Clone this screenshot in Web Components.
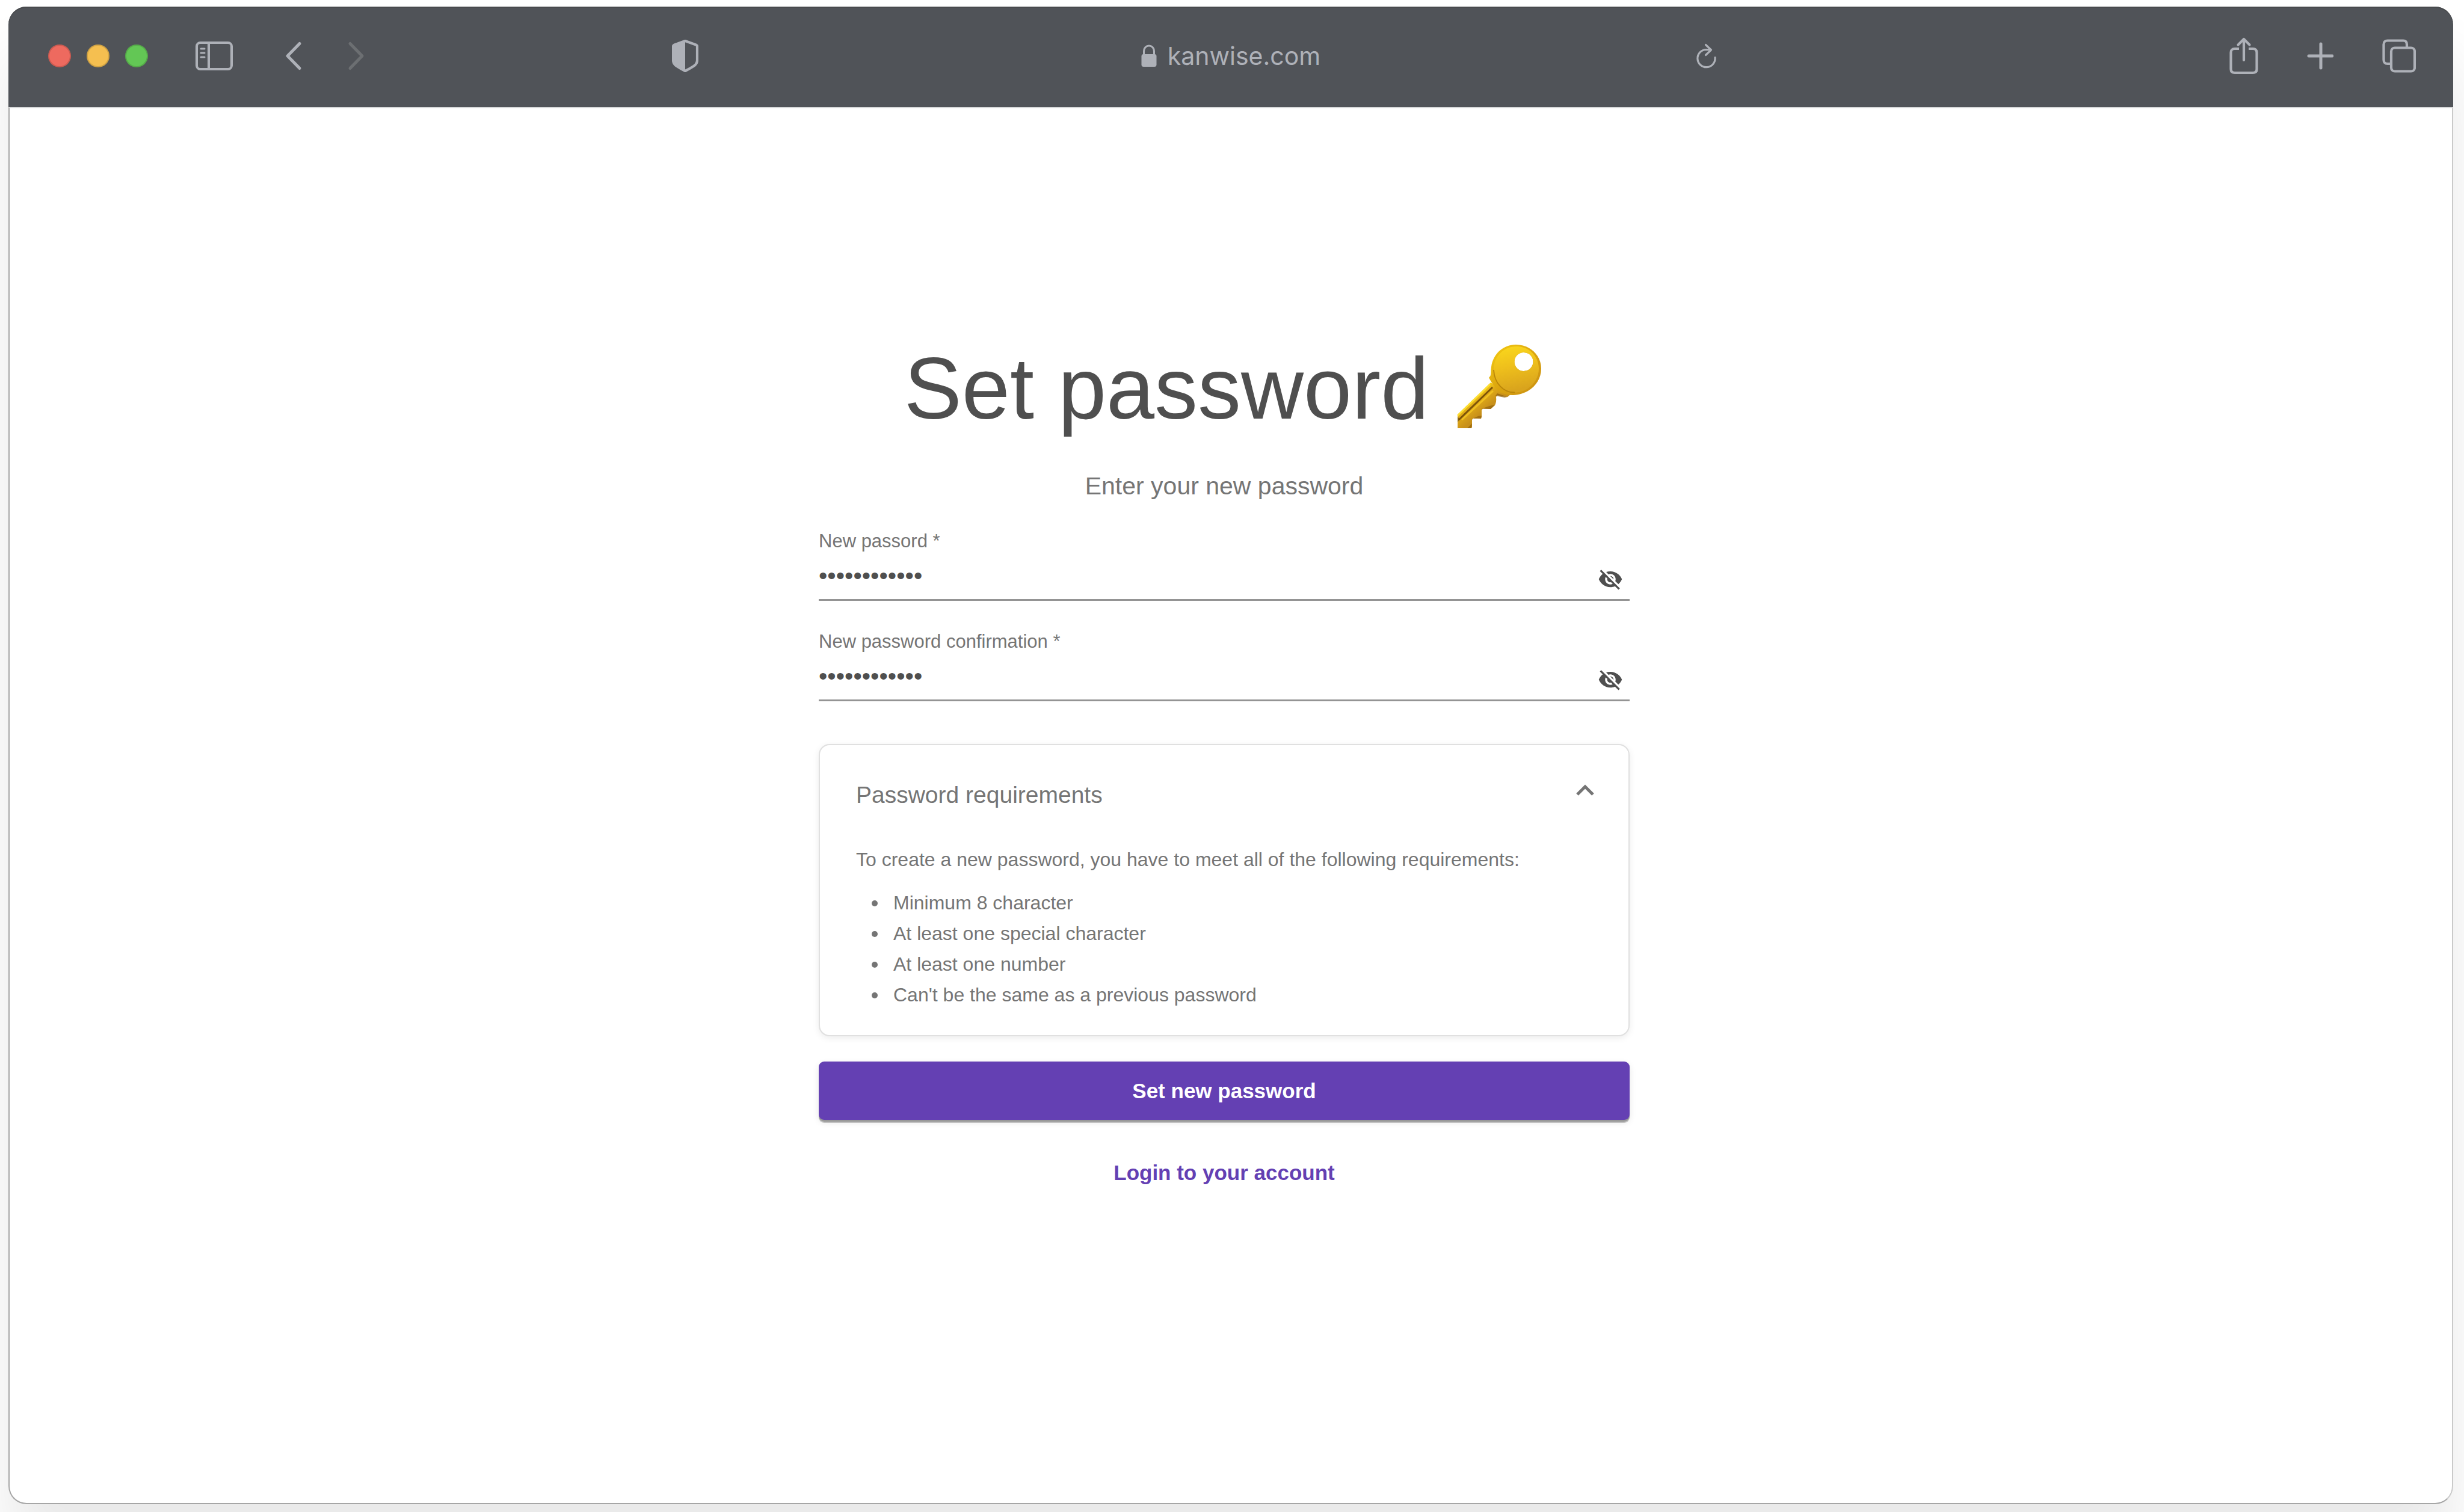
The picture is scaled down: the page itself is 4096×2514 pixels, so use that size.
<!DOCTYPE html>
<html lang="en">
<head>
<meta charset="utf-8">
<title>Set password</title>
<style>
html, body { height: 100%; }
body {
  margin: 0;
  box-sizing: border-box;
  padding: 11px 18px 13px 14px;
  background: #fff;
  overflow: hidden;
  font-family: "Liberation Sans", Arial, sans-serif;
  color: #757575;
}
</style>
</head>
<body>
<browser-window address="kanwise.com">
  <password-page>
    <span slot="title">Set password</span>
    <span slot="subtitle">Enter your new password</span>
    <password-field label="New passord *" value="kanwise-2023"></password-field>
    <password-field label="New password confirmation *" value="kanwise-2023"></password-field>
    <requirements-card slot="requirements" heading="Password requirements">
      <span slot="intro">To create a new password, you have to meet all of the following requirements:</span>
      <requirement-item>Minimum 8 character</requirement-item>
      <requirement-item>At least one special character</requirement-item>
      <requirement-item>At least one number</requirement-item>
      <requirement-item>Can't be the same as a previous password</requirement-item>
    </requirements-card>
    <submit-button slot="submit">Set new password</submit-button>
    <text-link slot="link" to="#login">Login to your account</text-link>
  </password-page>
</browser-window>

<script>
class BaseElement extends HTMLElement {
  connectedCallback() {
    if (this.shadowRoot) return;
    this.attachShadow({ mode: 'open' }).innerHTML = this.render();
    this.ready();
  }
  ready() {}
}

customElements.define('browser-window', class extends BaseElement {
  render() {
    return `<style>
      :host { display: flex; flex-direction: column; height: 100%; border-radius: 30px; box-shadow: 0 80px 100px rgba(0,0,0,.09); }
      main { flex: 1; box-sizing: border-box; background: #fff; border: 2px solid #a6a6a6; border-top-color: #d6d8d9; border-right-color: #cacaca; border-radius: 0 0 30px 30px; }
    </style>
    <browser-toolbar address="${this.getAttribute('address')}"></browser-toolbar>
    <main><slot></slot></main>`;
  }
});

customElements.define('browser-toolbar', class extends BaseElement {
  render() {
    return `<style>
      :host {
        display: grid; grid-template-columns: 1fr auto 1fr; align-items: center;
        box-sizing: border-box; height: 167px; padding: 0 62px 4px 66px;
        background: #505358; color: #aeb1b8; border-radius: 30px 30px 0 0;
        box-shadow: inset 0 2px 0 #484a4d;
      }
      .side, .tools, .lights, .nav, .address { display: flex; align-items: center; }
      .side { justify-content: space-between; }
      .leading { padding-right: 736px; }
      .trailing { padding-left: 621px; }
      .tools { gap: 79px; }
      .trailing .tools { gap: 81px; }
      .lights { gap: 26px; }
      .nav { gap: 68px; }
      .address { gap: 18px; margin-right: 4px; font: 41px/48px Inter, sans-serif; }
      button { display: block; padding: 0; border: 0; background: none; color: inherit; }
      button:disabled { color: #6c6f72; }
      svg { display: block; fill: none; stroke: currentColor; stroke-width: 5; stroke-linecap: round; stroke-linejoin: round; }
      .dot { width: 38px; height: 38px; border-radius: 50%; box-shadow: inset 0 0 0 2px rgba(0,0,0,.14); }
      .close { background: #ee6a5f; } .min { background: #f5bf50; } .max { background: #63c755; }
    </style>
    <div class="side leading">
      <div class="tools">
        <div class="lights">
          <button class="dot close" aria-label="Close"></button>
          <button class="dot min" aria-label="Minimize"></button>
          <button class="dot max" aria-label="Zoom"></button>
        </div>
        <button aria-label="Sidebar"><svg width="66" height="50" viewBox="0 0 66 50"><rect x="2" y="3" width="58" height="44" rx="6" stroke-width="4"/><path d="M22 3v44" stroke-width="4" stroke-linecap="butt"/><path d="M9 13h6M9 20h6M9 27h6" stroke-width="3"/></svg></button>
        <div class="nav">
          <button aria-label="Back"><svg width="36" height="50" viewBox="0 0 36 50"><path d="M28 4.500L8 25l20 20.500"/></svg></button>
          <button aria-label="Forward" disabled><svg width="36" height="50" viewBox="0 0 36 50"><path d="M8 4.500L28 25L8 45.500"/></svg></button>
        </div>
      </div>
      <button aria-label="Privacy report"><svg width="44" height="54" viewBox="0 0 44 54"><path d="M22 2L3.500 8.800Q2 9.500 2 11V34Q2 40 8 44Q14 48 22 52Q30 48 36 44Q42 40 42 34V11Q42 9.500 40.500 8.800Z" stroke-width="4.200"/><path d="M22 2L2 10V34Q3 40 8 44L22 52Z" fill="currentColor" stroke="none"/></svg></button>
    </div>
    <div class="address">
      <svg width="26" height="38" viewBox="0 0 26 38"><rect x="0.500" y="16" width="25" height="21" rx="3.500" fill="currentColor" stroke="none"/><path d="M4.500 17V11a8.500 9 0 0 1 17 0v6" stroke-width="3"/></svg>
      <span>${this.getAttribute('address')}</span>
    </div>
    <div class="side trailing">
      <button aria-label="Reload"><svg width="34" height="42" viewBox="0 0 34 42"><path d="M31 23.500A14.600 14.600 0 1 1 16.500 10.500L24 10.800M15.500 2.500L24.500 11L15.500 19.500" stroke-width="3.200"/></svg></button>
      <div class="tools">
        <button aria-label="Share"><svg width="48" height="62" viewBox="0 0 48 62"><path d="M16 19H9Q2.500 19 2.500 25.500V53Q2.500 59 9 59H39Q45.500 59 45.500 53V25.500Q45.500 19 39 19H32" stroke-width="4.200" stroke-linecap="butt"/><path d="M24 38V4M14.500 12.500L24 3L33.500 12.500" stroke-width="4.200"/></svg></button>
        <button aria-label="New tab"><svg width="44" height="46" viewBox="0 0 44 46"><path d="M23 3v40M3 23h39"/></svg></button>
        <button aria-label="Tab overview"><svg width="56" height="56" viewBox="0 0 56 56"><rect x="15" y="14.500" width="39" height="39" rx="6" stroke-width="4.200"/><path d="M15 41H9Q2.500 41 2.500 34.500V9Q2.500 2.500 9 2.500H35Q41 2.500 41 9V14" stroke-width="4.200" stroke-linecap="butt"/></svg></button>
      </div>
    </div>`;
  }
});

customElements.define('key-icon', class extends BaseElement {
  render() {
    return `<style>:host { display: block; } svg { display: block; }</style>
    <svg width="148" height="156" viewBox="0 -1 148 156" role="img" aria-label="Key">
      <defs>
        <linearGradient id="head" x1="0" y1="0" x2="0.200" y2="1"><stop offset="0" stop-color="#fbd91c"/><stop offset="0.500" stop-color="#eebf1c"/><stop offset="1" stop-color="#d9a41d"/></linearGradient>
        <linearGradient id="rim" x1="0" y1="0" x2="1" y2="1"><stop offset="0" stop-color="#f7cf12"/><stop offset="0.550" stop-color="#d9a20f"/><stop offset="1" stop-color="#c98f12"/></linearGradient>
        <linearGradient id="blade" gradientUnits="userSpaceOnUse" x1="24" y1="92" x2="44" y2="116"><stop offset="0" stop-color="#fbd31a"/><stop offset="0.400" stop-color="#e0ab17"/><stop offset="1" stop-color="#c8901a"/></linearGradient>
      </defs>
      <path d="M59 66L4 119V142H27L28 140V128L30 125.500L43 126L44 123V112L46 109.500L59 110L66 104Q69 98 68 90L70 87L87 90L93 85Z" fill="url(#blade)"/>
      <path d="M27 127L30 125.500L43 126L44 121L38 122ZM43 110L46 109.500L59 110L66 103L57 105ZM67 88L70 84L87 90L82 91ZM20 142H27L28 134Z" fill="#94640f" opacity=".75"/>
      <path d="M6 128L62 74" stroke="#7d5408" stroke-width="3" fill="none"/>
      <path d="M11 128L63 80" stroke="#f0c020" stroke-width="3" fill="none"/>
      <path d="M4 121L58 69" stroke="#fde02e" stroke-width="2.500" fill="none"/>
      <path d="M4 123v9l4-5z" fill="#6f4a08" opacity=".7"/>
      <path fill-rule="evenodd" fill="url(#rim)" d="M101 3C80 3 63 18 60 40C59 46 60 51 58.500 55L56 58L60 65Q66 74 74 82Q84 87 96 87C124 86 143 66 143 43C143 20 124 3 101 3ZM114 16a15.500 15.500 0 1 1 0 31a15.500 15.500 0 1 1 0-31Z"/>
      <path fill-rule="evenodd" fill="url(#head)" d="M102 6C81 6 65 22 64 43C64 66 80 83 99 82.500C122 82 139 64 139 43C139 22 123 6 102 6ZM114 16a15.500 15.500 0 1 1 0 31a15.500 15.500 0 1 1 0-31Z"/>
      <path d="M64 45C65 67 80 83 99 82.500" fill="none" stroke="#b98509" stroke-width="1.800"/>
    </svg>`;
  }
});

customElements.define('password-page', class extends BaseElement {
  render() {
    return `<style>
      :host { display: flex; justify-content: center; padding: 383px 22px 0 0; }
      form { display: flex; flex-direction: column; flex: 0 1 1348px; }
      h1 { display: flex; align-items: center; justify-content: center; gap: 44px; margin: 0; font-size: 144px; line-height: 168px; font-weight: 400; color: #4f4f4f; }
      .subtitle { margin: 53px 0 50px; font-size: 41px; line-height: 48px; text-align: center; }
      .fields { display: flex; flex-direction: column; gap: 50px; margin-bottom: 71px; }
      .submit { margin: 42px 0 67px; }
      .link { text-align: center; }
    </style>
    <form>
      <h1><slot name="title"></slot><key-icon></key-icon></h1>
      <p class="subtitle"><slot name="subtitle"></slot></p>
      <div class="fields"><slot></slot></div>
      <slot name="requirements"></slot>
      <div class="submit"><slot name="submit"></slot></div>
      <div class="link"><slot name="link"></slot></div>
    </form>`;
  }
});

customElements.define('password-field', class extends BaseElement {
  render() {
    return `<style>
      :host { display: block; }
      label { display: block; font-size: 31px; line-height: 36px; }
      .row { display: flex; align-items: center; height: 66px; padding: 12px 11px 0 0; border-bottom: 3px solid #949494; }
      input { flex: 1; min-width: 0; box-sizing: border-box; height: 64px; margin: 0; padding: 0 0 12px; border: 0; outline: 0; background: none; color: #4f4f4f; font: 41px/52px "Liberation Sans", Arial, sans-serif; }
      button { padding: 0; border: 0; background: none; color: #4f4f4f; }
      svg { display: block; fill: currentColor; }
    </style>
    <label for="field">${this.getAttribute('label')}</label>
    <div class="row">
      <input id="field" type="password" value="${this.getAttribute('value')}">
      <button type="button" aria-label="Show password"><svg width="42" height="42" viewBox="0 0 24 24"><path d="M12 7c2.760 0 5 2.240 5 5 0 .650-.130 1.260-.360 1.830l2.920 2.920c1.510-1.260 2.700-2.890 3.430-4.750-1.730-4.390-6-7.500-11-7.500-1.400 0-2.740.250-3.980.700l2.160 2.160C10.740 7.130 11.350 7 12 7zM2 4.270l2.280 2.280.460.460C3.080 8.300 1.780 10.020 1 12c1.730 4.390 6 7.500 11 7.500 1.550 0 3.030-.300 4.380-.840l.420.420L19.730 22 21 20.730 3.270 3 2 4.270zM7.530 9.800l1.550 1.550c-.050.210-.080.430-.080.650 0 1.660 1.340 3 3 3 .220 0 .440-.030.650-.080l1.550 1.550c-.670.330-1.410.530-2.200.530-2.760 0-5-2.240-5-5 0-.790.200-1.530.530-2.200zm4.310-.780l3.150 3.150.020-.160c0-1.660-1.340-3-3-3l-.170.010z"/></svg></button>
    </div>`;
  }
  ready() {
    const input = this.shadowRoot.querySelector('input');
    this.shadowRoot.querySelector('button').addEventListener('click', () => {
      input.type = input.type === 'password' ? 'text' : 'password';
    });
  }
});

customElements.define('requirements-card', class extends BaseElement {
  render() {
    return `<style>
      :host { display: block; padding: 60px 43px 41px 60px; border: 2px solid #e0e0e0; border-radius: 18px; background: #fff; box-shadow: 0 3px 12px rgba(0,0,0,.08); }
      h2 { margin: 0; font-weight: 400; }
      button { display: flex; justify-content: space-between; width: 100%; padding: 0; border: 0; background: none; color: inherit; font: 39px/46px "Liberation Sans", Arial, sans-serif; text-align: left; }
      svg { display: block; fill: none; stroke: currentColor; stroke-width: 5; }
      p { margin: 59px 0 21px; font-size: 32px; line-height: 51px; }
      .list { padding-left: 26px; font-size: 32px; line-height: 51px; }
      .closed { display: none; }
    </style>
    <h2><button type="button" aria-expanded="true"><span>${this.getAttribute('heading')}</span><svg width="58" height="46" viewBox="0 0 58 46"><path d="M16 22L29 9L42 22"/></svg></button></h2>
    <div class="body">
      <p><slot name="intro"></slot></p>
      <div class="list" role="list"><slot></slot></div>
    </div>`;
  }
  ready() {
    const button = this.shadowRoot.querySelector('button');
    button.addEventListener('click', () => {
      const closed = this.shadowRoot.querySelector('.body').classList.toggle('closed');
      button.setAttribute('aria-expanded', String(!closed));
    });
  }
});

customElements.define('requirement-item', class extends BaseElement {
  render() {
    this.setAttribute('role', 'listitem');
    return `<style>
      :host { display: flex; align-items: center; gap: 26px; }
      :host::before { content: ""; width: 10px; height: 10px; border-radius: 50%; background: currentColor; }
    </style><slot></slot>`;
  }
});

customElements.define('submit-button', class extends BaseElement {
  render() {
    return `<style>
      :host { display: block; }
      button { display: block; width: 100%; height: 97px; padding: 0; border: 0; border-radius: 9px; background: #6440b3; color: #fff; font: bold 35px/42px "Liberation Sans", Arial, sans-serif; box-shadow: 0 3px 0 rgba(0,0,0,.2), 0 5px 0 rgba(0,0,0,.2), 0 4px 12px rgba(0,0,0,.1); }
    </style><button type="button"><slot></slot></button>`;
  }
});

customElements.define('text-link', class extends BaseElement {
  render() {
    return `<style>
      :host { display: block; }
      a { color: #6440b3; font-size: 35px; line-height: 42px; font-weight: bold; text-decoration: none; }
    </style><a href="${this.getAttribute('to')}"><slot></slot></a>`;
  }
});
</script>
</body>
</html>
